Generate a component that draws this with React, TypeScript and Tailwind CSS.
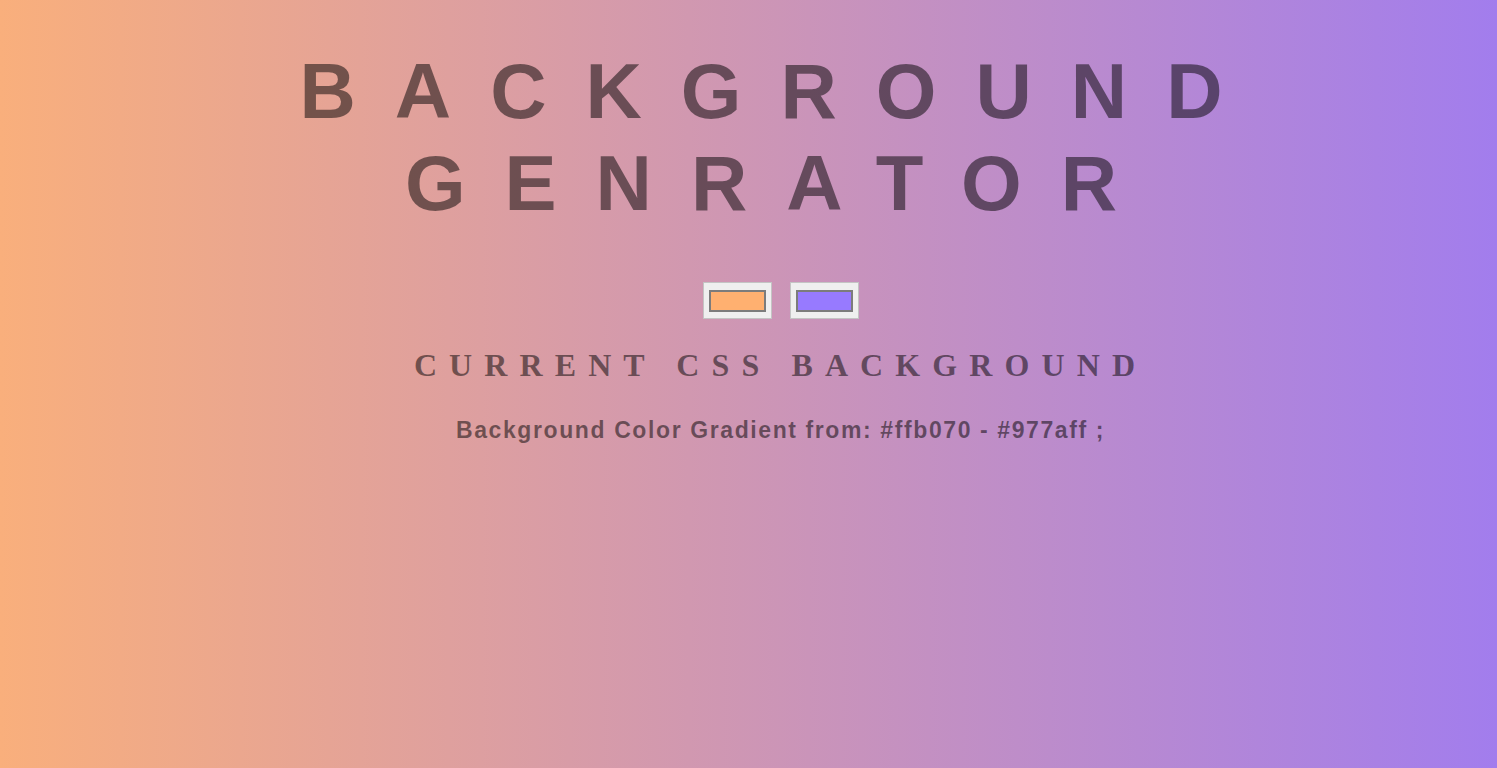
import React from 'react';

const Swatch: React.FC<{ color: string }> = ({ color }) => {
  return (
    <div className="w-[69px] h-[37px] bg-[#efefef] border border-[#c4c4c4] flex items-center justify-center">
      <div className="w-[57px] h-[22px] border-2 border-[#7c7c7c]" style={{ backgroundColor: color }} />
    </div>
  );
};

const App: React.FC = () => {
  return (
    <div className="min-h-screen w-full bg-[linear-gradient(to_right,#f9af7c,#a27ded)] text-black/50 pl-[64px] flex flex-col items-center">
      <h1 className="mt-[45px] text-center text-[78px] leading-[92px] font-bold tracking-[39px] uppercase font-['Liberation_Sans',Arial,sans-serif]">
        Background
        <br />
        Genrator
      </h1>
      <div className="mt-[53px] flex items-center gap-[18px]">
        <Swatch color="#ffb070" />
        <Swatch color="#977aff" />
      </div>
      <h3 className="mt-[28px] text-[32px] leading-[36px] font-bold tracking-[12.1px] uppercase font-['Liberation_Serif','Times_New_Roman',serif]">
        Current CSS Background
      </h3>
      <p className="mt-[34px] text-[23px] leading-[26px] font-bold tracking-[1.6px] font-['Liberation_Sans',Arial,sans-serif]">
        Background Color Gradient from: #ffb070 - #977aff ;
      </p>
    </div>
  );
};

export default App;
